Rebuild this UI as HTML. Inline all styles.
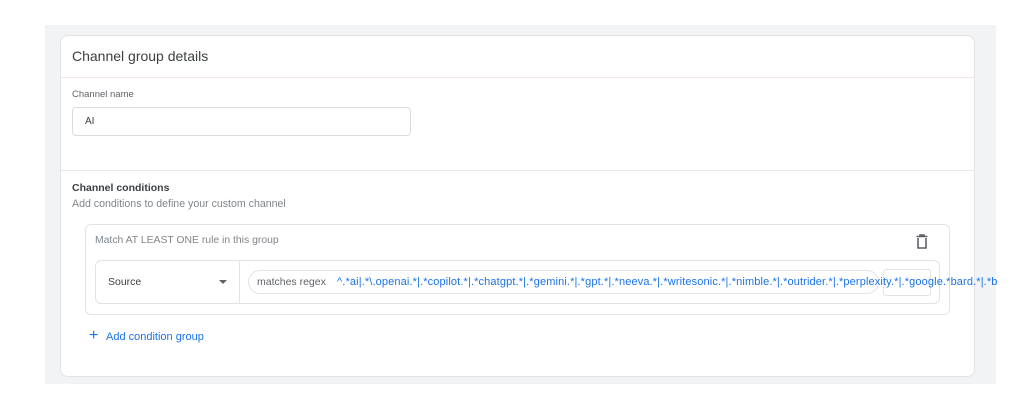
<!DOCTYPE html>
<html><head><style>
*{box-sizing:border-box;margin:0;padding:0}
body{width:1030px;height:403px;background:#fff;font-family:"Liberation Sans",Arial,sans-serif;position:relative;overflow:hidden}
.abs{position:absolute}
.panel{left:45px;top:25px;width:951px;height:359px;background:#f1f3f4}
.card{left:60px;top:35px;width:915px;height:342px;background:#fff;border:1px solid #e3e3e3;border-radius:8px}
</style></head><body>
<div class="abs panel"></div>
<div class="abs card"></div>
<div class="abs" style="left:72px;top:48px;font-size:14px;color:#3c4043">Channel group details</div>
<div class="abs" style="left:61px;top:77px;width:913px;height:1px;background:#f2e4e8"></div>
<div class="abs" style="left:72px;top:89px;font-size:9.5px;color:#5f6368">Channel name</div>
<div class="abs" style="left:72px;top:107px;width:339px;height:29px;border:1px solid #dadce0;border-radius:4px"></div>
<div class="abs" style="left:85px;top:116px;font-size:10px;color:#3c4043">AI</div>
<div class="abs" style="left:61px;top:170px;width:913px;height:1px;background:#e8e8e8"></div>
<div class="abs" style="left:72px;top:182px;font-size:10.5px;font-weight:bold;color:#3c4043">Channel conditions</div>
<div class="abs" style="left:72px;top:198px;font-size:10.6px;color:#80868b">Add conditions to define your custom channel</div>
<div class="abs" style="left:85px;top:224px;width:865px;height:91px;border:1px solid #e3e3e3;border-radius:6px"></div>
<div class="abs" style="left:95px;top:235px;font-size:10.4px;color:#80868b">Match AT LEAST ONE rule in this group</div>
<svg class="abs" style="left:915px;top:234px" width="14" height="16" viewBox="0 0 14 16"><path d="M1.5 2.5h11M5 2.5V1h4v1.5M3 4v10h8V4" fill="none" stroke="#5f6368" stroke-width="1.6"/></svg>
<div class="abs" style="left:95px;top:260px;width:845px;height:44px;border:1px solid #e3e3e3;border-radius:6px"></div>
<div class="abs" style="left:239px;top:261px;width:1px;height:42px;background:#e3e3e3"></div>
<div class="abs" style="left:108px;top:276px;font-size:10.5px;color:#3c4043">Source</div>
<svg class="abs" style="left:219px;top:280px" width="8" height="5"><path d="M0 0h8L4 4z" fill="#5f6368"/></svg>
<div class="abs" style="left:248px;top:270px;width:631px;height:24px;border:1px solid #e3e3e3;border-radius:12px"></div>
<div class="abs" style="left:883px;top:269px;width:48px;height:27px;border:1px solid #e3e3e3;border-radius:3px"></div>
<div class="abs" style="left:257px;top:276px;font-size:10.5px;color:#5f6368;white-space:nowrap">matches regex</div>
<div class="abs" style="left:337px;top:276px;font-size:11px;color:#1a73e8;white-space:nowrap;letter-spacing:0.13px">^.*ai|.*\.openai.*|.*copilot.*|.*chatgpt.*|.*gemini.*|.*gpt.*|.*neeva.*|.*writesonic.*|.*nimble.*|.*outrider.*|.*perplexity.*|.*google.*bard.*|.*b</div>
<div class="abs" style="left:89px;top:328px;font-size:16px;color:#1a73e8;line-height:16px">+</div>
<div class="abs" style="left:106px;top:331px;font-size:11px;color:#1a73e8">Add condition group</div>
</body></html>
